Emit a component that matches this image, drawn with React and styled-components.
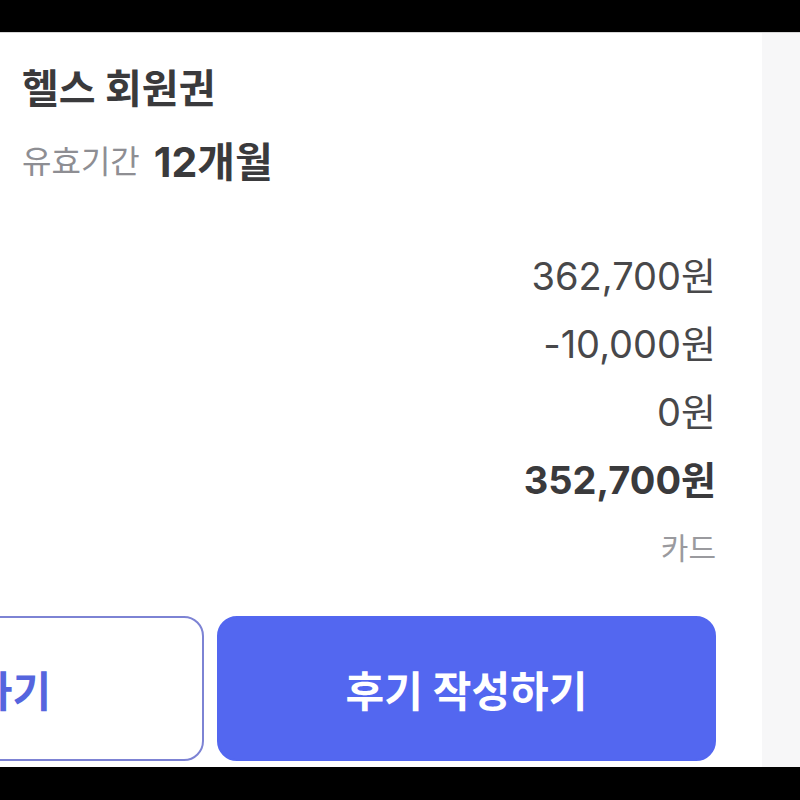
import React from 'react';
import styled, { createGlobalStyle } from 'styled-components';

const GlobalStyle = createGlobalStyle`
  html, body {
    margin: 0;
    padding: 0;
    background: #000;
  }
  body {
    font-family: Inter, "Noto Sans CJK KR", sans-serif;
  }
`;

const Screen = styled.div`
  width: 800px;
  height: 800px;
  display: flex;
  flex-direction: column;
  background: #000;
  overflow: hidden;
`;

const BlackBar = styled.div`
  flex: 0 0 ${(p) => p.height}px;
  background: #000;
`;

const Main = styled.div`
  flex: 1;
  display: flex;
  border-top: 1px solid #d6d6d6;
  overflow: hidden;
`;

const Card = styled.section`
  width: 762px;
  background: #fff;
  display: flex;
  flex-direction: column;
  padding: 32px 46px 0 22px;
  box-sizing: border-box;
`;

const SidePanel = styled.aside`
  flex: 1;
  background: #f7f7f8;
`;

const Title = styled.h1`
  margin: 0;
  font-size: 40px;
  line-height: 48px;
  font-weight: 700;
  color: #3a3a3c;
`;

const Period = styled.div`
  margin-top: 25px;
  display: flex;
  align-items: center;
  line-height: 48px;
`;

const PeriodLabel = styled.span`
  font-size: 32px;
  color: #8e8e93;
`;

const PeriodValue = styled.span`
  margin-left: 14px;
  font-size: 41px;
  font-weight: 700;
  color: #3a3a3c;
`;

const Amounts = styled.div`
  margin-top: 66px;
  display: flex;
  flex-direction: column;
  align-items: flex-end;
  gap: 20px;
`;

const Amount = styled.div`
  font-size: ${(p) => (p.small ? 30 : 38)}px;
  line-height: 48px;
  font-weight: ${(p) => (p.bold ? 700 : 400)};
  color: ${(p) => (p.muted ? '#9a9a9e' : p.bold ? '#3a3a3c' : '#48484a')};
`;

const Actions = styled.div`
  margin-top: 44px;
  margin-left: -317px;
  display: flex;
  gap: 13px;
`;

const Button = styled.button`
  flex: 1;
  height: 145px;
  border-radius: 20px;
  font-family: inherit;
  font-size: 42px;
  font-weight: 700;
  cursor: pointer;
  border: 2px solid ${(p) => (p.outline ? '#7d83d4' : '#5367f0')};
  background: ${(p) => (p.outline ? '#fff' : '#5367f0')};
  color: ${(p) => (p.outline ? '#5565de' : '#fff')};
`;

const App = () => {
  return (
    <Screen>
      <GlobalStyle />
      <BlackBar height={32} />
      <Main>
        <Card>
          <Title>헬스 회원권</Title>
          <Period>
            <PeriodLabel>유효기간</PeriodLabel>
            <PeriodValue>12개월</PeriodValue>
          </Period>

          <Amounts>
            <Amount>362,700원</Amount>
            <Amount>-10,000원</Amount>
            <Amount>0원</Amount>
            <Amount bold>352,700원</Amount>
            <Amount small muted>카드</Amount>
          </Amounts>

          <Actions>
            <Button outline>재구매하기</Button>
            <Button>후기 작성하기</Button>
          </Actions>
        </Card>
        <SidePanel />
      </Main>
      <BlackBar height={33} />
    </Screen>
  );
};

export default App;
